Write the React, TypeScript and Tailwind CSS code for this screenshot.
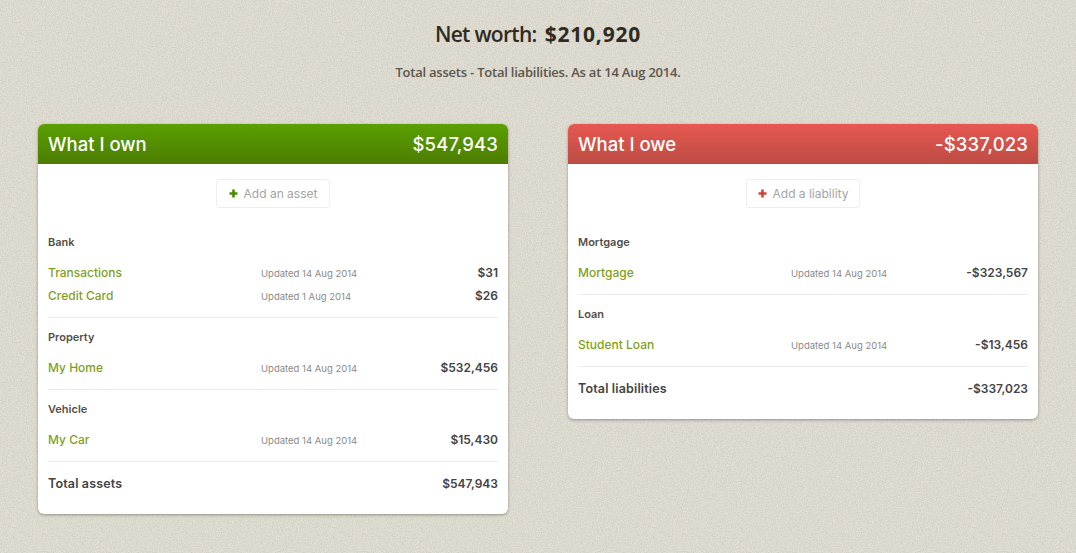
import React from "react";

const body = "font-['Inter','Liberation_Sans',sans-serif]";
const head = "font-['Open_Sans','Noto_Sans',sans-serif]";

function Row({ name, date, amount }: { name: string; date: string; amount: string }) {
  return (
    <div className="flex items-center h-[23px]">
      <span className="w-[213px] text-[12px] font-medium text-[#7f9f1c]">{name}</span>
      <span className="flex-1 pt-[3px] text-[9.5px] text-[#8a8a8a]">{date}</span>
      <span className="text-[12px] font-semibold text-[#444444]">{amount}</span>
    </div>
  );
}

function Group({ title, rows }: { title: string; rows: { name: string; date: string; amount: string }[] }) {
  return (
    <div className="border-b border-[#ececec] pb-[10px] mb-[10px]">
      <div className="h-[18px] flex items-center text-[11px] font-semibold text-[#555049] mb-[10px]">{title}</div>
      {rows.map((r) => (
        <Row key={r.name} {...r} />
      ))}
    </div>
  );
}

function Card({
  title,
  total,
  headerClass,
  plusClass,
  addLabel,
  totalLabel,
  groups,
}: {
  title: string;
  total: string;
  headerClass: string;
  plusClass: string;
  addLabel: string;
  totalLabel: string;
  groups: { title: string; rows: { name: string; date: string; amount: string }[] }[];
}) {
  return (
    <section className="w-[470px] rounded-[6px] bg-white shadow-[0_1px_3px_rgba(60,55,40,0.45)] overflow-hidden">
      <header className={`h-[40px] flex items-center justify-between px-[10px] pt-[2px] text-white text-[18.5px] font-medium ${headerClass}`}>
        <span>{title}</span>
        <span className="tracking-[0.1px]">{total}</span>
      </header>
      <div className="px-[10px] pt-[15px] pb-[20px]">
        <div className="flex justify-center mb-[25px]">
          <button className="w-[114px] h-[29px] flex items-center justify-center gap-[6px] rounded-[3px] border border-[#eeeeee] text-[12px] text-[#a5a5a5]">
            <svg width="9" height="9" viewBox="0 0 9 9" className={plusClass}>
              <path d="M3.2 0.5h2.6v2.7h2.7v2.6H5.8v2.7H3.2V5.8H0.5V3.2h2.7z" fill="currentColor" />
            </svg>
            {addLabel}
          </button>
        </div>
        {groups.map((g) => (
          <Group key={g.title} {...g} />
        ))}
        <div className="flex justify-between items-center h-[22px] pt-[2px] text-[12.5px] font-semibold text-[#444444]">
          <span className="tracking-[0.15px]">{totalLabel}</span>
          <span className="text-[12px]">{total}</span>
        </div>
      </div>
    </section>
  );
}

export default function App() {
  return (
    <div className={`relative w-[1076px] h-[553px] overflow-hidden bg-[#e2dfd5] ${body}`}>
      <svg className="absolute inset-0 w-full h-full" aria-hidden="true">
        <filter id="paper">
          <feTurbulence type="fractalNoise" baseFrequency="0.8" numOctaves="3" seed="4" />
          <feColorMatrix values="0 0 0 0 0.45  0 0 0 0 0.43  0 0 0 0 0.36  0 0 0 0.75 -0.24" />
        </filter>
        <rect width="100%" height="100%" filter="url(#paper)" />
      </svg>
      <div className="relative flex flex-col items-center">
        <h1 className={`mt-[20px] h-[30px] flex items-center gap-[8px] text-[21px] text-[#2e2b22] ${head}`}>
          <span className="font-semibold tracking-[-0.7px]">Net worth:</span>
          <span className="font-bold tracking-[0.8px]">$210,920</span>
        </h1>
        <p className={`mt-[13px] h-[20px] flex items-center text-[13px] font-semibold tracking-[-0.22px] text-[#5a564c] ${head}`}>
          Total assets - Total liabilities. As at 14 Aug 2014.
        </p>
        <div className="mt-[41px] flex items-start gap-[60px]">
          <Card
            title="What I own"
            total="$547,943"
            headerClass="bg-gradient-to-b from-[#5aa000] to-[#4c7d02]"
            plusClass="text-[#4c8a05]"
            addLabel="Add an asset"
            totalLabel="Total assets"
            groups={[
              {
                title: "Bank",
                rows: [
                  { name: "Transactions", date: "Updated 14 Aug 2014", amount: "$31" },
                  { name: "Credit Card", date: "Updated 1 Aug 2014", amount: "$26" },
                ],
              },
              { title: "Property", rows: [{ name: "My Home", date: "Updated 14 Aug 2014", amount: "$532,456" }] },
              { title: "Vehicle", rows: [{ name: "My Car", date: "Updated 14 Aug 2014", amount: "$15,430" }] },
            ]}
          />
          <Card
            title="What I owe"
            total="-$337,023"
            headerClass="bg-gradient-to-b from-[#e65850] to-[#bd4c44]"
            plusClass="text-[#d0443e]"
            addLabel="Add a liability"
            totalLabel="Total liabilities"
            groups={[
              { title: "Mortgage", rows: [{ name: "Mortgage", date: "Updated 14 Aug 2014", amount: "-$323,567" }] },
              { title: "Loan", rows: [{ name: "Student Loan", date: "Updated 14 Aug 2014", amount: "-$13,456" }] },
            ]}
          />
        </div>
      </div>
    </div>
  );
}
